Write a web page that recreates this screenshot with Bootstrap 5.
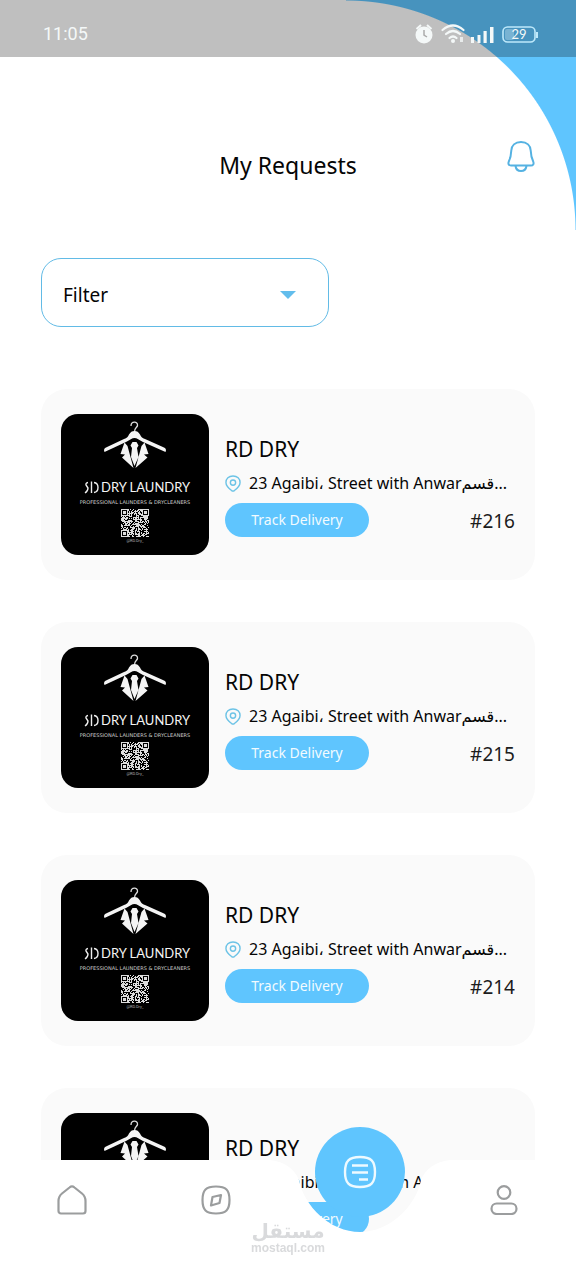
<!DOCTYPE html>
<html lang="en">
<head>
<meta charset="utf-8">
<meta name="viewport" content="width=device-width, initial-scale=1">
<title>My Requests</title>
<link href="https://cdn.jsdelivr.net/npm/bootstrap@5.3.0/dist/css/bootstrap.min.css" rel="stylesheet">
<style>
  :root { --sky: #5fc5fe; --sky-line: #62bbe6; }
  body { font-family: "Noto Sans", "DejaVu Sans", sans-serif; color: #050505; background: #fff; min-height: 100vh; }
  .corner { position: absolute; top: 0; right: 0; width: 230px; height: 230px; background: radial-gradient(circle at 0 100%, transparent 229px, var(--sky) 230px); }
  .statusbar { height: 57px; padding: 10px 38px 0 43px; background: rgba(0,0,0,.25); color: #f4f8f8; font: 400 18px Roboto, sans-serif; }
  .page-head { padding: 84px 41px 77px; display: grid; grid-template-columns: 1fr auto 1fr; }
  .page-head h1 { font-size: 23px; line-height: 32px; margin: 8px 0 0; font-weight: 400; }
  .bell { width: 28px; height: 32px; }
  .page-body { padding: 0 41px; }
  .filter { width: 288px; height: 69px; padding: 6px 60px 0 21px; border: 1px solid var(--sky-line); border-radius: 20px; font-size: 19px; color: #050505; background: #fff url("data:image/svg+xml,%3Csvg xmlns='http://www.w3.org/2000/svg' viewBox='0 0 16 8'%3E%3Cpath d='M0 0h16L8 8z' fill='%2362bdec'/%3E%3C/svg%3E") no-repeat right 32px top 32px / 16px 8px; }
  .requests { margin-top: 62px; gap: 42px; }
  .request { background: #fafafa; border-radius: 26px; padding: 25px 20px; gap: 16px; }
  .shop-logo { width: 148px; height: 141px; flex: none; }
  .request-info { padding-top: 19px; }
  .request h2 { font-size: 21px; line-height: 32px; font-weight: 400; margin: 0; }
  .address { font-size: 16px; line-height: 24px; margin-top: 6px; gap: 8px; }
  .address svg { width: 16px; height: 17px; flex: none; }
  .track { width: 144px; height: 34px; border: 0; border-radius: 17px; background: var(--sky); color: #f2fbff; font-size: 14px; line-height: 32px; padding: 0; }
  .track:hover { background: #48b4ef; color: #fff; }
  .order-no { font-size: 19px; line-height: 36px; color: #1c1c1c; }
  .tabbar { height: 120px; }
  .tabbar-shape { position: absolute; inset: 0; }
  .side-left { width: calc(62.5% - 90px); background: #fff; }
  .side-right { background: #fff; }
  .notch { width: 180px; height: 120px; }
  .tabs { position: relative; height: 80px; }
  .tabs a { color: #9b9d9e; }
  .tabs svg { width: 30px; height: 30px; }
  .tabs a.round { width: 90px; height: 90px; margin-top: -57px; border-radius: 50%; background: var(--sky); color: #eefaff; }
  .tabs .round svg { width: 34px; height: 34px; }
  .watermark { position: absolute; left: 0; right: 0; top: 61px; color: #d9dadc; font-weight: 700; pointer-events: none; }
  .watermark span { font-size: 20px; line-height: 20px; font-family: "DejaVu Sans", sans-serif; }
  .watermark small { font-size: 12px; line-height: 14px; font-family: "Liberation Sans", sans-serif; }
</style>
</head>
<body class="position-relative">
<div class="corner"></div>
<div class="statusbar d-flex justify-content-between align-items-center position-relative">
  <span>11:05</span>
  <svg width="124" height="24" viewBox="0 0 124 24" aria-hidden="true" fill="#f4f8f8">
    <circle cx="10" cy="13" r="8.5"/><path d="M2.500 7 7 3M17.500 7 13 3" stroke="#f4f8f8" stroke-width="2"/><path d="M10 8v5l3 2" fill="none" stroke="#aaa" stroke-width="1.500"/>
    <g fill="none" stroke="#f4f8f8" stroke-width="2.200" stroke-linecap="round"><path d="M28.500 8Q39-1 49.500 8M32 12Q39 6 46 12M35.500 16Q39 13 42.500 16"/></g>
    <circle cx="39" cy="19" r="2"/><path d="M46 15h3v5h-3z" opacity=".8"/>
    <path d="M57 15h3v6h-3zM63.500 13h3v8h-3zM69.500 9h3.200v12h-3.200zM76 5h3.500v16H76z"/>
    <rect x="89" y="5" width="32" height="15" rx="4.500" fill="none" stroke="#bfe9fb" stroke-width="1.600"/><path d="M122 10h2v6h-2z" fill="#bfe9fb"/>
    <rect x="91" y="7" width="9" height="11" rx="2" fill="#79b3d3"/>
    <text x="105" y="17" font-family="Lato, sans-serif" font-weight="400" font-size="13" text-anchor="middle">29</text>
  </svg>
</div>

<header class="page-head position-relative">
  <span></span>
  <h1>My Requests</h1>
  <button class="btn p-0 border-0 bell d-flex ms-auto" aria-label="Notifications">
    <svg width="28" height="32" viewBox="0 0 28 32" fill="none" stroke="#55b2e2" stroke-width="2"><path d="M14 1C8 1 4.500 4.500 4.300 9.500C4.100 15 3.500 17 1.800 20.500C.8 23 2 24.500 4 24.500H24C26 24.500 27.200 23 26.200 20.500C24.500 17 23.900 15 23.700 9.500C23.500 4.500 20 1 14 1ZM8.500 25C9 28.500 11 30 14 30S19 28.500 19.500 25"/></svg>
  </button>
</header>

<main class="page-body">
  <select class="form-select filter" aria-label="Filter"><option>Filter</option></select>
  <div class="requests d-flex flex-column" id="requests"></div>
</main>

<nav class="tabbar fixed-bottom" aria-label="Main">
  <div class="tabbar-shape d-flex">
    <div class="side-left"></div>
    <svg class="notch" viewBox="0 0 180 120" fill="#fff" aria-hidden="true"><path d="M0 0C16 2 25 10 29 20C34 46 60 72 90 72S146 46 151 20C155 10 164 2 180 0V120H0Z"/></svg>
    <div class="side-right flex-grow-1"></div>
  </div>
  <div class="tabs row g-0 align-items-center">
    <div class="col d-flex justify-content-center"><a href="#" aria-label="Home" class="d-flex"><svg viewBox="0 0 30 30" fill="none" stroke="currentColor" stroke-width="2.200"><path d="M12.500 2.500C14 1.200 16 1.200 17.500 2.500L25 8.500C27.500 10.500 28.500 13 28.500 16V26C28.500 27.500 27.500 28.500 26 28.500H4C2.500 28.500 1.500 27.500 1.500 26V16C1.500 13 2.500 10.500 5 8.500Z"/></svg></a></div>
    <div class="col d-flex justify-content-center"><a href="#" aria-label="Explore" class="d-flex"><svg viewBox="0 0 30 30" fill="none" stroke="currentColor" stroke-width="2.200" stroke-linejoin="round"><path d="M15 1.500C25 1.500 28.500 5 28.500 15S25 28.500 15 28.500 1.500 25 1.500 15 5 1.500 15 1.500ZM11.500 12 20 10 18.500 18 10 20.500Z"/></svg></a></div>
    <div class="col d-flex justify-content-center"><a href="#" aria-label="My requests" class="round d-flex align-items-center justify-content-center"><svg viewBox="0 0 34 34" fill="none" stroke="currentColor" stroke-width="2.400"><path d="M17 2C28 2 32 6 32 17S28 32 17 32 2 28 2 17 6 2 17 2ZM9 10.500H25M9 17.500H25M16 24.500H25"/></svg></a></div>
    <div class="col d-flex justify-content-center"><a href="#" aria-label="Profile" class="d-flex"><svg viewBox="0 0 30 30" fill="none" stroke="currentColor" stroke-width="2.200"><circle cx="15" cy="7.500" r="6.300"/><rect x="2.500" y="18.500" width="25" height="10.500" rx="5.200"/></svg></a></div>
  </div>
  <div class="watermark d-flex flex-column align-items-center"><span lang="ar">مستقل</span><small>mostaql.com</small></div>
</nav>

<script>
  // Pseudo-random modules with the three finder squares of a QR code.
  function qrPath(n) {
    let seed = 7, d = '';
    const finder = (x, y) => {
      for (const [ox, oy] of [[0, 0], [n - 7, 0], [0, n - 7]]) {
        const a = x - ox, b = y - oy;
        if (a >= 0 && a < 7 && b >= 0 && b < 7) {
          const m = Math.max(Math.abs(a - 3), Math.abs(b - 3));
          return m === 2 ? 0 : 1;
        }
      }
      return -1;
    };
    for (let y = 0; y < n; y++) for (let x = 0; x < n; x++) {
      seed = (seed * 1103515245 + 12345) % 2147483648;
      const f = finder(x, y);
      if (f === 1 || (f < 0 && seed / 2147483648 > .42)) d += `M${x} ${y}h1v1h-1z`;
    }
    return d;
  }
  const qr = qrPath(28);
  const logo = `<svg class="shop-logo" viewBox="0 0 148 141" role="img" aria-label="RD Dry Laundry" fill="#f4f4f4">
    <rect width="148" height="141" rx="17" fill="#000"/>
    <path d="M70 12C70 7 77 7 76.500 11.500C76 14 73.500 13.500 73.500 18" fill="none" stroke="#ddd" stroke-width="1.300"/>
    <path d="M73.500 17C76 17 77.500 18 79 20.500C80 22.500 81 24 84 25L103 33.500C105 34.500 105.500 36 104.500 38L82 28C78 26 76 24 73.500 24S69 26 65 28L43.500 38C42.500 36 43 34.500 45 33.500L63 25C66 24 67 22.500 68 20.500C69.500 18 71 17 73.500 17Z"/>
    <path d="M63.500 28.500 59.500 40 64 40.500 61 43.500 72.500 54 66.500 32ZM83.500 28.500 87.500 40 83 40.500 86.500 43.500 74.500 54 80.500 32ZM71.500 28H75.500L77.500 31.500 76 34 77.500 43 73.500 52 70 43 71 34 69.500 31.500Z"/>
    <path d="M27 68.500Q24.500 69 25 71L27 74Q27 77 24 79M30.500 67.500V79M33 68.500Q37 69 37 73.500T33 78.500" fill="none" stroke="#eee" stroke-width="1.400"/>
    <text x="40" y="78" font-family="Lato, sans-serif" font-size="13">DRY LAUNDRY</text>
    <text x="74" y="90" text-anchor="middle" font-family="DejaVu Sans, sans-serif" font-size="5" fill="#ccc">PROFESSIONAL LAUNDERS &amp; DRYCLEANERS</text>
    <path transform="translate(60 95)" d="${qr}" fill="#ddd"/>
    <text x="74" y="128" text-anchor="middle" font-family="Roboto, sans-serif" font-size="4" fill="#aaa">@RD.Dry_</text>
  </svg>`;
  document.getElementById('requests').innerHTML = [216, 215, 214, 213].map(no => `
    <article class="request d-flex">
      ${logo}
      <div class="request-info flex-grow-1 overflow-hidden">
        <h2>RD DRY</h2>
        <div class="address d-flex align-items-center text-nowrap">
          <svg viewBox="0 0 17 18" fill="none" stroke="#6cc3e6" stroke-width="1.500"><path d="M8.500 1C4 1 1 4 1 8C1 12 5 15 7 16.500Q8.500 17.500 10 16.500C12 15 16 12 16 8C16 4 13 1 8.500 1Z"/><circle cx="8.500" cy="8" r="2.800"/></svg>
          <span>23 Agaibi، Street with Anwarقسم...</span>
        </div>
        <div class="d-flex justify-content-between mt-2">
          <button class="btn track">Track Delivery</button>
          <span class="order-no">#${no}</span>
        </div>
      </div>
    </article>`).join('');
</script>
<script src="https://cdn.jsdelivr.net/npm/bootstrap@5.3.0/dist/js/bootstrap.bundle.min.js"></script>
</body>
</html>
